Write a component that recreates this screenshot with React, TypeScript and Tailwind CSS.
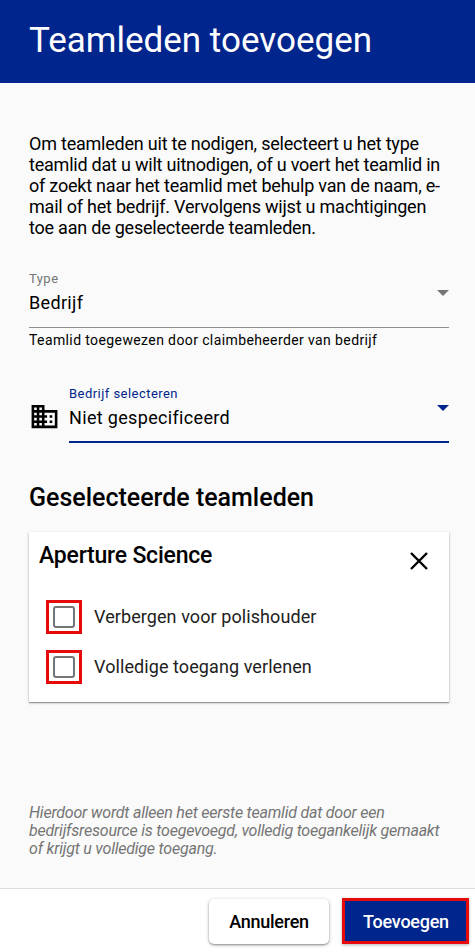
import React from 'react';

interface SelectFieldProps {
  label: string;
  value: string;
  active?: boolean;
}

const SelectField: React.FC<SelectFieldProps> = ({ label, value, active = false }) => (
  <div
    className={
      active
        ? 'flex h-[59px] flex-1 justify-between border-b-2 border-[#00258c] text-[#00258c]'
        : 'flex h-[59px] justify-between border-b border-[#8c8f8f] text-[#757575]'
    }
  >
    <div>
      <div className="h-[20px] text-[13px] leading-[20px] tracking-[0.46px]">{label}</div>
      <div className="mt-[2px] text-[18px] leading-[24px] tracking-[0.33px] text-black">{value}</div>
    </div>
    <svg className="mt-[21px] h-[6px] w-[12px]" viewBox="0 0 12 6" fill="currentColor">
      <path d="M0 0h12L6 6z" />
    </svg>
  </div>
);

const permissions = ['Verbergen voor polishouder', 'Volledige toegang verlenen'];

export default function App() {
  return (
    <div className="flex h-[952px] w-[475px] flex-col overflow-hidden bg-[#fafafa] font-['Roboto',sans-serif] text-black">
      <header className="flex h-[83px] shrink-0 items-center bg-[#00258c] px-[29px] pb-px">
        <h1 className="text-[35px] leading-[42px] whitespace-nowrap text-white">Teamleden toevoegen</h1>
      </header>

      <main className="flex flex-1 flex-col px-[29px] pr-[26px]">
        <p className="mt-[50px] text-[18px] leading-[21px] tracking-[-0.22px] whitespace-nowrap">
          Om teamleden uit te nodigen, selecteert u het type
          <br />
          teamlid dat u wilt uitnodigen, of u voert het teamlid in
          <br />
          of zoekt naar het teamlid met behulp van de naam, e-
          <br />
          mail of het bedrijf. Vervolgens wijst u machtigingen
          <br />
          toe aan de geselecteerde teamleden.
        </p>

        <div className="mt-[31px]">
          <SelectField label="Type" value="Bedrijf" />
          <div className="mt-[2px] text-[14px] leading-[20px] tracking-[0.39px]">
            Teamlid toegewezen door claimbeheerder van bedrijf
          </div>
        </div>

        <div className="mt-[34px] flex">
          <svg className="mt-[17px] mr-[9px] h-[31px] w-[31px]" viewBox="0 0 24 24" fill="currentColor">
            <path d="M12 7V3H2v18h20V7H12zM6 19H4v-2h2v2zm0-4H4v-2h2v2zm0-4H4V9h2v2zm0-4H4V5h2v2zm4 12H8v-2h2v2zm0-4H8v-2h2v2zm0-4H8V9h2v2zm0-4H8V5h2v2zm10 12h-8v-2h2v-2h-2v-2h2v-2h-2V9h8v10zm-2-8h-2v2h2v-2zm0 4h-2v2h2v-2z" />
          </svg>
          <SelectField label="Bedrijf selecteren" value="Niet gespecificeerd" active />
        </div>

        <h2 className="mt-[39px] text-[25px] leading-[32px] font-medium">Geselecteerde teamleden</h2>

        <section className="mt-[18px] h-[170px] w-[420px] bg-white px-[10px] shadow-[0_1px_1px_rgba(0,0,0,0.3),0_1px_3px_rgba(0,0,0,0.2)]">
          <div className="flex h-[68px] justify-between">
            <h3 className="mt-[8px] text-[23px] leading-[32px] font-medium tracking-[-0.22px]">Aperture Science</h3>
            <svg
              className="mt-[20px] mr-[11px] h-[18px] w-[18px]"
              viewBox="0 0 18 18"
              stroke="currentColor"
              strokeWidth="2.4"
            >
              <path d="M1 1l16 16M17 1L1 17" />
            </svg>
          </div>
          <div className="flex flex-col gap-4 pl-[7px]">
            {permissions.map((permission) => (
              <label key={permission} className="flex h-[34px] items-center">
                <span className="flex h-[34px] w-[36px] items-center justify-center border-[3px] border-[#e60a0a]">
                  <span className="h-[22px] w-[22px] rounded-[3px] border-2 border-[#757575]" />
                </span>
                <span className="ml-[12px] text-[18px] leading-[24px] tracking-[0.08px] text-[#212121]">
                  {permission}
                </span>
              </label>
            ))}
          </div>
        </section>

        <p className="mt-[102px] text-[16px] leading-[18px] tracking-[-0.22px] whitespace-nowrap text-[#757575] italic">
          Hierdoor wordt alleen het eerste teamlid dat door een
          <br />
          bedrijfsresource is toegevoegd, volledig toegankelijk gemaakt
          <br />
          of krijgt u volledige toegang.
        </p>
      </main>

      <footer className="flex h-[64px] shrink-0 justify-end border-t border-[#dedede] bg-white pr-[6px]">
        <button className="mt-[10px] mr-[13px] h-[45px] w-[120px] rounded-[5px] bg-white text-[18px] font-medium tracking-[-0.25px] shadow-[0_1px_2px_rgba(0,0,0,0.35),0_1px_4px_rgba(0,0,0,0.2)]">
          Annuleren
        </button>
        <button className="mt-[9px] h-[46px] w-[127px] border-[3px] border-[#e60a0a] bg-[#00258c] pl-px text-[18px] font-medium tracking-[-0.25px] text-white shadow-[0_1px_3px_rgba(0,0,0,0.3)]">
          Toevoegen
        </button>
      </footer>
    </div>
  );
}
